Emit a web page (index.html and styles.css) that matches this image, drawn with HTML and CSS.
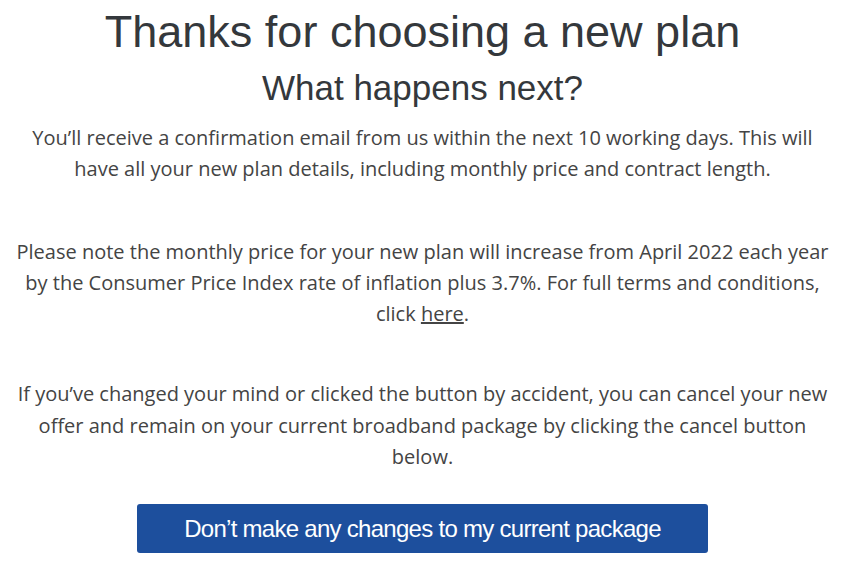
FILE: index.html
```html
<!DOCTYPE html>
<html lang="en">
<head>
<meta charset="utf-8">
<title>Thanks for choosing a new plan</title>
<link rel="stylesheet" href="styles.css">
</head>
<body>
<main class="page">
  <h1 class="title">Thanks for choosing a new plan</h1>
  <h2 class="subtitle">What happens next?</h2>
  <p class="copy">You’ll receive a confirmation email from us within the next 10 working days. This will have all your new plan details, including monthly price and contract length.</p>
  <p class="copy copy-tight">Please note the monthly price for your new plan will increase from April 2022 each year by the Consumer Price Index rate of inflation plus 3.7%. For full terms and conditions, click <a class="link" href="#">here</a>.</p>
  <p class="copy">If you’ve changed your mind or clicked the button by accident, you can cancel your new offer and remain on your current broadband package by clicking the cancel button below.</p>
  <div class="actions">
    <button class="btn" type="button">Don’t make any changes to my current package</button>
  </div>
</main>
</body>
</html>
```

FILE: styles.css
```css
html, body {
  margin: 0;
  padding: 0;
  background: #ffffff;
}
.page {
  width: 845px;
  padding: 0 8px;
  box-sizing: border-box;
  text-align: center;
}
.title {
  margin: 0;
  padding-top: 6px;
  font-family: "Liberation Sans", Arial, sans-serif;
  font-weight: 400;
  font-size: 45px;
  line-height: 52px;
  color: #34383c;
}
.subtitle {
  margin: 10px 0 0;
  font-family: "Liberation Sans", Arial, sans-serif;
  font-weight: 400;
  font-size: 35px;
  line-height: 40px;
  color: #34383c;
}
.copy {
  margin: 0 0 51px;
  font-family: "Open Sans", sans-serif;
  font-size: 20px;
  line-height: 31.3px;
  color: #444444;
}
.copy:first-of-type {
  margin-top: 14px;
}
.copy-tight {
  margin-bottom: 49px;
}
.copy:last-of-type {
  margin-bottom: 32px;
}
.link {
  color: #444444;
  text-decoration: underline;
}
.actions {
  display: flex;
  justify-content: center;
}
.btn {
  width: 571px;
  height: 49px;
  border: 0;
  border-radius: 3px;
  background: #1d4f9d;
  color: #ffffff;
  font-family: "Liberation Sans", Arial, sans-serif;
  font-size: 24px;
  letter-spacing: -0.72px;
  cursor: pointer;
}
```
